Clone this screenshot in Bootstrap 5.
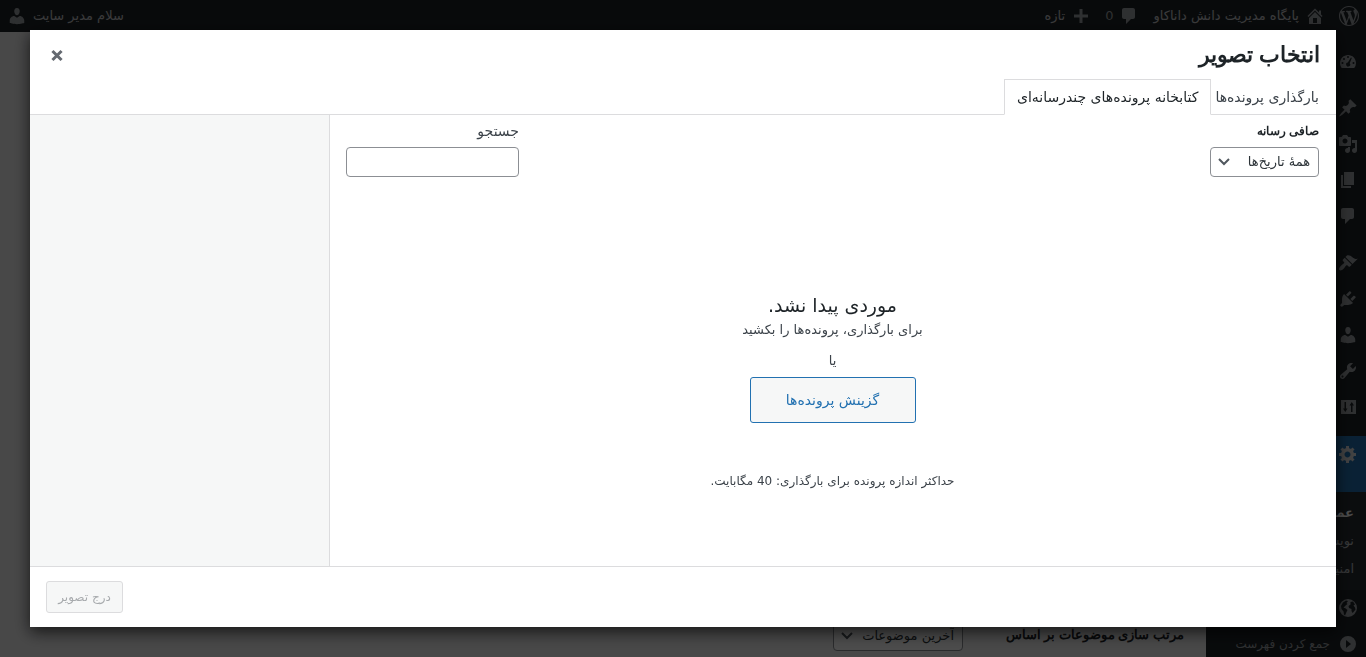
<!DOCTYPE html>
<html lang="fa" dir="rtl">
<head>
<meta charset="utf-8">
<meta name="viewport" content="width=device-width, initial-scale=1">
<title>انتخاب تصویر</title>
<link href="https://cdn.jsdelivr.net/npm/bootstrap@5.3.0/dist/css/bootstrap.min.css" rel="stylesheet">
<style>
  :root { --ink: #1d2327; --ink-soft: #3c434a; --line: #dcdcde; --accent: #2271b1; }
  body { font-family: "DejaVu Sans", sans-serif; font-size: 13px; line-height: 20px; background: #f0f0f1; color: var(--ink-soft); }
  a { text-decoration: none; color: inherit; }
  svg { fill: currentColor; display: block; flex: none; }
  .page { height: 100vh; overflow: hidden; }

  .adminbar { height: 32px; flex: none; background: var(--ink); color: #9ca0a4; padding: 0 7px; }
  .adminbar nav { gap: 14px; }
  .adminbar a { gap: 6px; }
  .adminbar .bar-text { color: #c3c4c7; }

  .sidemenu { width: 160px; background: var(--ink); color: #9ca0a4; padding-top: 11px; flex: none; font-size: 12px; }
  .sidemenu a { height: 36px; padding: 0 8px; gap: 8px; }
  .sidemenu .gap-above { margin-top: 11px; }
  .sidemenu .active-item { height: 56px; padding-top: 8px; background: var(--accent); color: #dcdcde; align-items: flex-start; }
  .submenu { background: #262c31; padding: 7px 0; font-size: 13px; color: #b4b9be; }
  .sidemenu .submenu a { height: 28px; padding: 0 12px; }
  .submenu .chosen { color: #fff; font-weight: 600; }

  .settings { padding: 0 22px 6px; }
  .settings label { width: 221px; margin-bottom: 6px; font: bold 13px/20px "Liberation Sans", sans-serif; color: var(--ink); }
  .wp-select { appearance: none; border: 1px solid #8c8f94; border-radius: 4px; height: 30px; background: #fff; color: #2c3338; font-size: 13px; width: 100%; padding: 0 8px; }
  .select-wrap { position: relative; }
  .settings .select-wrap { width: 130px; }
  .select-wrap svg { position: absolute; left: 8px; top: 9px; pointer-events: none; fill: none; stroke: #50575e; stroke-width: 2; }

  .shade { position: fixed; inset: 0; background: rgba(0, 0, 0, .7); }
  .media-modal { position: fixed; inset: 30px; background: #fff; box-shadow: 0 5px 15px rgba(0, 0, 0, .7); }
  .modal-top { padding: 0 16px; height: 49px; flex: none; }
  .modal-top h1 { font: bold 22px/48px "Liberation Sans", sans-serif; color: var(--ink); margin: 0; }
  .close-x { background: none; border: 0; color: #646970; padding: 4px; }
  .tabs { padding: 0 6px; height: 36px; flex: none; border-bottom: 1px solid var(--line); }
  .tabs button { height: 36px; padding: 0 10px 0 3px; border: 1px solid transparent; background: none; font-size: 14px; color: var(--ink-soft); }
  .tabs button.current { padding: 0 12px; background: #fff; border-color: var(--line) var(--line) #fff; color: var(--ink); }

  .library { padding: 6px 17px 0 16px; }
  .library label { line-height: 20px; margin-bottom: 6px; }
  .library .filter-label { font: bold 12px/20px "Liberation Sans", sans-serif; color: var(--ink); }
  .library .date-filter { width: 109px; }
  .library .search-field { width: 173px; }
  .search-field label { font-size: 14px; }
  .search-field input { height: 30px; border: 1px solid #8c8f94; border-radius: 4px; padding: 0 8px; }
  .uploader { padding: 114px 0 40px; }
  .uploader h2 { font-size: 19px; line-height: 29px; color: var(--ink); margin: 0; font-weight: 400; }
  .uploader .or-line { margin: 11px 0 0; }
  .pick-btn { height: 46px; min-width: 166px; border: 1px solid var(--accent); border-radius: 3px; background: #f6f7f7; color: var(--accent); font-size: 14px; margin-top: 6px; }
  .uploader .small-note { font-size: 12px; margin: 48px 0 0; }
  .details { width: 300px; background: #f6f7f7; border-right: 1px solid var(--line); flex: none; }
  .modal-bottom { height: 61px; flex: none; border-top: 1px solid var(--line); padding: 0 16px; }
  .insert-btn { height: 32px; width: 77px; border: 1px solid var(--line); border-radius: 3px; background: #f6f7f7; color: #a7aaad; font-size: 12px; padding: 0; }
</style>
</head>
<body>
<div class="page d-flex flex-column">
  <header class="adminbar d-flex justify-content-between align-items-center">
    <nav class="d-flex align-items-center" aria-label="نوار مدیریت">
      <a href="#" class="d-flex" aria-label="وردپرس"><svg width="20" height="20" viewBox="0 0 20 20"><path d="M20 10c0-5.51-4.49-10-10-10C4.48 0 0 4.49 0 10c0 5.52 4.48 10 10 10 5.51 0 10-4.48 10-10zM7.78 15.37L4.37 6.22c.55-.02 1.17-.08 1.17-.08.5-.06.44-1.13-.06-1.11 0 0-1.45.11-2.37.11-.18 0-.37 0-.58-.01C4.12 2.69 6.87 1.11 10 1.11c2.33 0 4.45.87 6.05 2.34-.68-.11-1.65.39-1.65 1.58 0 .74.45 1.36.9 2.1.35.61.55 1.36.55 2.46 0 1.49-1.4 5-1.4 5l-3.03-8.37c.54-.02.82-.17.82-.17.5-.05.44-1.25-.06-1.22 0 0-1.44.12-2.38.12-.87 0-2.33-.12-2.33-.12-.5-.03-.56 1.2-.06 1.22l.92.08 1.26 3.41zM17.41 10c.24-.64.74-1.87.43-4.25.7 1.29 1.05 2.71 1.05 4.25 0 3.29-1.73 6.24-4.4 7.78.97-2.59 1.94-5.2 2.92-7.78zM6.1 18.09C3.12 16.65 1.11 13.53 1.11 10c0-1.3.23-2.48.72-3.59C3.25 10.3 4.67 14.2 6.1 18.09zm4.03-6.63l2.58 6.98c-.86.29-1.76.45-2.71.45-.79 0-1.57-.11-2.29-.33.81-2.38 1.62-4.74 2.42-7.1z"/></svg></a>
      <a href="#" class="d-flex align-items-center"><svg width="20" height="20" viewBox="0 0 20 20"><path d="M16 8.500l1.530 1.530-1.060 1.060L10 4.600l-6.470 6.490-1.060-1.060L10 2.500l4 4v-2h2v4zm-6-2.460l6 5.990V18H4v-5.970zM12 17v-5H8v5h4z"/></svg><span class="bar-text">پایگاه مدیریت دانش داناکاو</span></a>
      <a href="#" class="d-flex align-items-center"><svg width="20" height="20" viewBox="0 0 20 20"><path d="M5 2h9c1.1 0 2 .9 2 2v7c0 1.1-.9 2-2 2h-2l-5 5v-5H5c-1.1 0-2-.9-2-2V4c0-1.1.9-2 2-2z"/></svg><span>0</span></a>
      <a href="#" class="d-flex align-items-center"><svg width="20" height="20" viewBox="0 0 20 20"><path d="M8.500 3h3v5.500H17v3h-5.500V17h-3v-5.500H3v-3h5.500z"/></svg><span class="bar-text">تازه</span></a>
    </nav>
    <a href="#" class="d-flex align-items-center"><span class="bar-text">سلام مدیر سایت</span><svg width="20" height="20" viewBox="0 0 20 20"><path d="M10 9.250c-2.270 0-2.730-3.440-2.730-3.440C7 4.020 7.820 2 9.970 2c2.160 0 2.980 2.020 2.710 3.810 0 0-.410 3.440-2.680 3.440zm0 2.570L12.720 10c2.390 0 4.520 2.330 4.520 4.530v2.490s-3.650 1.130-7.240 1.130c-3.650 0-7.240-1.130-7.240-1.130v-2.490c0-2.250 1.940-4.480 4.470-4.480z"/></svg></a>
  </header>

  <div class="d-flex flex-grow-1 overflow-hidden">
    <nav class="sidemenu" aria-label="فهرست">
      <a href="#" class="d-flex align-items-center" aria-label="پیشخوان"><svg width="20" height="20" viewBox="0 0 20 20"><path fill-rule="evenodd" d="M3.760 17h12.480A7.950 7.950 0 0 0 18 12c0-4.410-3.580-8-8-8s-8 3.590-8 8c0 1.940.660 3.660 1.760 5zM9 6a1 1 0 1 1 2 0 1 1 0 0 1-2 0zM5 8a1 1 0 1 1 2 0 1 1 0 0 1-2 0zM3.500 12a1 1 0 1 1 2 0 1 1 0 0 1-2 0zM14.500 12a1 1 0 1 1 2 0 1 1 0 0 1-2 0zM13.800 7l-2.100 5.300a2 2 0 1 1-1.900-.700L13 6.600z"/></svg></a>
      <a href="#" class="d-flex align-items-center gap-above" aria-label="نوشته‌ها"><svg width="20" height="20" viewBox="0 0 20 20"><path d="M10.440 3.020l1.820-1.820 6.360 6.350-1.830 1.820c-1.050-.680-2.480-.570-3.410.360l-.750.750c-.920.930-1.040 2.350-.350 3.410l-1.830 1.820-2.410-2.410-2.800 2.790c-.420.420-3.380 2.710-3.800 2.290s1.860-3.390 2.280-3.810l2.790-2.790L4.100 9.360l1.830-1.820c1.050.690 2.480.570 3.400-.360l.750-.750c.930-.920 1.050-2.350.360-3.410z"/></svg></a>
      <a href="#" class="d-flex align-items-center" aria-label="رسانه"><svg width="20" height="20" viewBox="0 0 20 20"><path d="M13 11V4c0-.55-.45-1-1-1h-1.670L9 1H5L3.670 3H2c-.55 0-1 .45-1 1v7c0 .55.45 1 1 1h10c.55 0 1-.45 1-1zM7 4.500c1.380 0 2.500 1.120 2.500 2.500S8.380 9.500 7 9.500 4.500 8.380 4.500 7 5.620 4.500 7 4.500zM14 6h5v10.500c0 1.380-1.120 2.500-2.500 2.500S14 17.880 14 16.500s1.120-2.500 2.500-2.500c.17 0 .34.02.5.05V9h-3V6zm-4 8.050V13h2v3.500c0 1.380-1.120 2.500-2.500 2.500S7 17.880 7 16.500 8.120 14 9.500 14c.17 0 .34.02.5.05z"/></svg></a>
      <a href="#" class="d-flex align-items-center" aria-label="برگه‌ها"><svg width="20" height="20" viewBox="0 0 20 20"><path d="M6 15V2h10v13H6zm-1 1h8v2H3V5h2v11z"/></svg></a>
      <a href="#" class="d-flex align-items-center" aria-label="دیدگاه‌ها"><svg width="20" height="20" viewBox="0 0 20 20"><path d="M5 2h9c1.100 0 2 .9 2 2v7c0 1.100-.9 2-2 2h-2l-5 5v-5H5c-1.100 0-2-.9-2-2V4c0-1.100.9-2 2-2z"/></svg></a>
      <a href="#" class="d-flex align-items-center gap-above" aria-label="نمایش"><svg width="20" height="20" viewBox="0 0 20 20"><path d="M14.480 11.060L7.410 3.990l1.500-1.500c.5-.56 2.300-.47 3.510.32 1.210.8 1.430 1.280 2.910 2.100 1.180.64 2.450 1.260 4.450.85zm-.71.71L6.700 4.700 4.930 6.470c-.39.39-.39 1.020 0 1.410l1.060 1.060c.39.39.39 1.030 0 1.420-.6.6-1.430 1.110-2.210 1.690-.35.26-.7.53-1.010.84C1.430 14.230.4 16.080 1.400 17.070c.99 1 2.840-.03 4.180-1.360.31-.31.58-.66.85-1.020.57-.78 1.080-1.610 1.690-2.210.39-.39 1.020-.39 1.410 0l1.060 1.060c.39.39 1.020.39 1.410 0z"/></svg></a>
      <a href="#" class="d-flex align-items-center" aria-label="افزونه‌ها"><svg width="20" height="20" viewBox="0 0 20 20"><path d="M13.110 4.360L9.870 7.600 8 5.730l3.240-3.240c.35-.34 1.050-.2 1.560.32.52.51.66 1.210.31 1.550zm-8 1.770l.91-1.120 9.010 9.010-1.190.84c-.71.71-2.630 1.160-3.820 1.160H6.140L4.900 17.260c-.59.59-1.540.59-2.120 0-.59-.58-.59-1.530 0-2.120l1.240-1.240v-3.880c0-1.130.4-3.190 1.090-3.890zm7.260 3.970l3.240-3.240c.34-.35 1.040-.21 1.550.31.52.51.66 1.210.31 1.550l-3.240 3.250z"/></svg></a>
      <a href="#" class="d-flex align-items-center" aria-label="کاربران"><svg width="20" height="20" viewBox="0 0 20 20"><path d="M10 9.250c-2.270 0-2.730-3.440-2.730-3.440C7 4.020 7.820 2 9.970 2c2.160 0 2.980 2.020 2.710 3.810 0 0-.410 3.440-2.680 3.440zm0 2.570L12.720 10c2.390 0 4.520 2.330 4.520 4.530v2.490s-3.650 1.130-7.240 1.130c-3.650 0-7.240-1.130-7.240-1.130v-2.490c0-2.250 1.940-4.480 4.470-4.480z"/></svg></a>
      <a href="#" class="d-flex align-items-center" aria-label="ابزارها"><svg width="20" height="20" viewBox="0 0 20 20"><path d="M16.680 9.770c-1.340 1.340-3.300 1.670-4.950.99l-5.410 6.520c-.99.99-2.590.99-3.580 0s-.99-2.590 0-3.570l6.520-5.420c-.68-1.650-.35-3.610.99-4.950 1.280-1.280 3.120-1.620 4.720-1.060l-2.890 2.890 2.820 2.820 2.860-2.870c.53 1.580.18 3.390-1.080 4.650zM3.810 16.210c.4.39 1.040.39 1.430 0 .4-.4.4-1.040 0-1.430-.39-.4-1.030-.4-1.430 0-.39.39-.39 1.030 0 1.430z"/></svg></a>
      <a href="#" class="d-flex align-items-center" aria-label="گزینه‌ها"><svg width="20" height="20" viewBox="0 0 20 20"><path fill-rule="evenodd" d="M3 3h15v14H3zM6.500 5v6.500H5l2.300 3.500 2.200-3.500H8V5zM13 15V8.500h-1.500L13.800 5 16 8.500h-1.500V15z"/></svg></a>
      <a href="#" class="d-flex active-item gap-above" aria-label="تنظیمات"><svg width="20" height="20" viewBox="0 0 20 20"><path fill-rule="evenodd" d="M18 12h-2.180c-.17.7-.44 1.350-.81 1.930l1.540 1.540-2.100 2.100-1.540-1.540c-.58.36-1.230.63-1.910.79V19H8v-2.180c-.68-.16-1.330-.43-1.910-.79l-1.540 1.540-2.120-2.120 1.540-1.540c-.36-.58-.63-1.230-.79-1.910H1V9.030h2.170c.16-.7.44-1.350.8-1.940L2.430 5.550l2.100-2.100 1.540 1.540c.58-.37 1.240-.64 1.930-.81V2h3v2.180c.68.16 1.330.43 1.910.79l1.540-1.540 2.120 2.120-1.540 1.540c.36.59.64 1.240.8 1.940H18V12zm-8.500 1.500c1.660 0 3-1.340 3-3s-1.340-3-3-3-3 1.340-3 3 1.340 3 3 3z"/></svg></a>
      <div class="submenu">
        <a href="#" class="d-flex align-items-center chosen">عمومی</a>
        <a href="#" class="d-flex align-items-center">نویسندگی</a>
        <a href="#" class="d-flex align-items-center">امنیت</a>
      </div>
      <a href="#" class="d-flex align-items-center" aria-label="سایت"><svg width="20" height="20" viewBox="0 0 20 20"><path fill-rule="evenodd" d="M10 1a9 9 0 1 1 0 18 9 9 0 0 1 0-18zM3 8l2-3.500 3-2 2 .5-1.500 2 1 1-2.500 2-1.500 2H7l2.500 2-1 2-1.500 3.500-1-1-.5-3L3.500 11zM12.500 4l2.500-.5 2 3-1.500 1 1.500 2 .5 2-2 2.500-1 1-1-2v-2l-2.500-1-.5-2 2-1.500z"/></svg></a>
      <a href="#" class="d-flex align-items-center"><svg width="20" height="20" viewBox="0 0 20 20"><path fill-rule="evenodd" d="M10 2a8 8 0 1 1 0 16 8 8 0 0 1 0-16zM8 6v8l5-4z"/></svg>جمع کردن فهرست</a>
    </nav>
    <main class="settings flex-grow-1 d-flex align-items-end">
      <label for="sort">مرتب سازی موضوعات بر اساس</label>
      <div class="select-wrap">
        <select id="sort" class="wp-select"><option>آخرین موضوعات</option></select>
        <svg width="12" height="12" viewBox="0 0 12 12"><path d="M1 3l5 5 5-5"/></svg>
      </div>
    </main>
  </div>
</div>

<div class="shade"></div>

<section class="media-modal d-flex flex-column" role="dialog" aria-labelledby="dialog-title">
  <div class="modal-top d-flex justify-content-between align-items-center">
    <h1 id="dialog-title">انتخاب تصویر</h1>
    <button type="button" class="close-x" aria-label="بستن"><svg width="14" height="14" viewBox="0 0 14 14"><path d="M3.500 4l7 7m0-7l-7 7" stroke="currentColor" stroke-width="3" stroke-linecap="square"/></svg></button>
  </div>
  <div class="tabs d-flex" role="tablist">
    <button type="button" role="tab">بارگذاری پرونده‌ها</button>
    <button type="button" role="tab" class="current" aria-selected="true">کتابخانه پرونده‌های چندرسانه‌ای</button>
  </div>
  <div class="d-flex flex-grow-1">
    <div class="library flex-grow-1">
      <div class="d-flex justify-content-between">
        <div class="date-filter">
          <label for="dates" class="filter-label d-block">صافی رسانه</label>
          <div class="select-wrap">
            <select id="dates" class="wp-select"><option>همهٔ تاریخ‌ها</option></select>
            <svg width="12" height="12" viewBox="0 0 12 12"><path d="M1 3l5 5 5-5"/></svg>
          </div>
        </div>
        <div class="search-field">
          <label for="find" class="d-block">جستجو</label>
          <input id="find" type="search" class="w-100">
        </div>
      </div>
      <div class="uploader text-center">
        <h2>موردی پیدا نشد.</h2>
        <p class="mb-0">برای بارگذاری، پرونده‌ها را بکشید</p>
        <p class="or-line">یا</p>
        <button type="button" class="pick-btn">گزینش پرونده‌ها</button>
        <p class="small-note">حداکثر اندازه پرونده برای بارگذاری: 40 مگابایت.</p>
      </div>
    </div>
    <aside class="details"></aside>
  </div>
  <div class="modal-bottom d-flex align-items-center justify-content-end">
    <button type="button" class="insert-btn" disabled>درج تصویر</button>
  </div>
</section>
<script src="https://cdn.jsdelivr.net/npm/bootstrap@5.3.0/dist/js/bootstrap.bundle.min.js"></script>
</body>
</html>
